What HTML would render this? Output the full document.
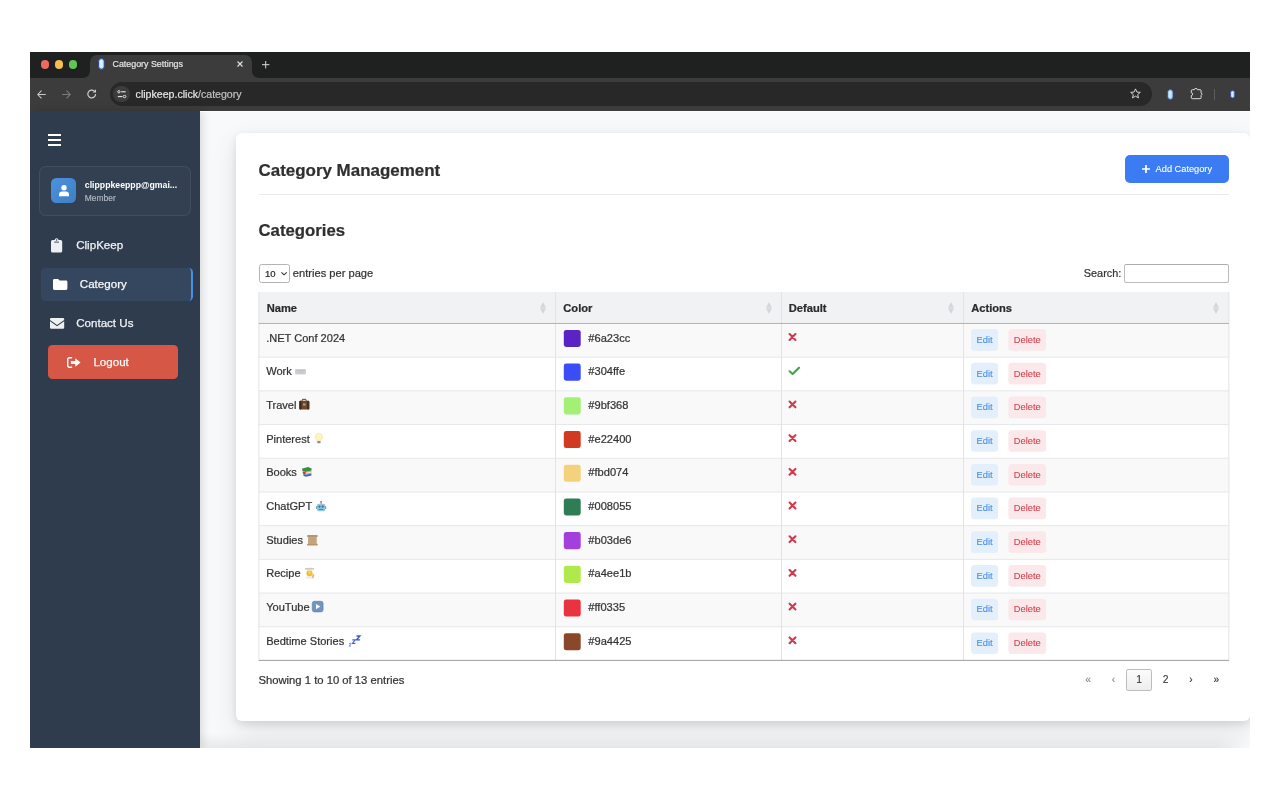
<!DOCTYPE html>
<html lang="en">
<head>
<meta charset="utf-8">
<title>Category Settings</title>
<style>
*{box-sizing:border-box;margin:0;padding:0}
html,body{width:1280px;height:800px;overflow:hidden;background:#fff}
body{font-family:"Liberation Sans",sans-serif;color:#333;position:relative}
.abs{position:absolute}
#win{position:absolute;left:0;top:0;width:1280px;height:800px;clip-path:inset(52px 30px 52.4px 30px);will-change:transform;transform:translateZ(0)}
/* browser chrome */
#tabbar{left:30px;top:52px;width:1220px;height:26px;background:#1f2120}
#toolbar{left:30px;top:77.6px;width:1220px;height:33.4px;background:#3c3c3c}
#tab{left:90px;top:55px;width:161.5px;height:23px;background:#3c3c3c;border-radius:7px 7px 0 0}
.tabcurve{width:7px;height:7px;top:70.7px;background:#3c3c3c}
.tabcurve i{position:absolute;left:0;top:0;width:7px;height:7px;background:#1f2120}
#tabtitle{-webkit-text-stroke:.18px;left:112.5px;top:59.2px;font-size:8.87px;color:#e6e6e6;line-height:11px;white-space:nowrap}
#urlbar{left:110px;top:82.4px;width:1042px;height:23.4px;border-radius:12px;background:#282828}
#urlchip{left:113.2px;top:85.8px;width:16.6px;height:16.6px;border-radius:50%;background:#3c3c3c}
#urltext{-webkit-text-stroke:.18px;left:135.6px;top:87.5px;font-size:10.6px;line-height:13px;color:#e8e8e8;white-space:nowrap}
#urltext span{color:#c6c6c6}
/* page */
#page{left:30px;top:111px;width:1220px;height:637px;background:#f8f9fa}
#pagetopline{left:200px;top:111px;width:1220px;height:1px;background:#fdfdfe}
#sidebar{left:30px;top:111px;width:170px;height:637px;background:#2f3c4e;box-shadow:2px 0 9px rgba(0,0,0,.14)}
#card{left:236px;top:133px;width:1013.5px;height:588px;background:#fff;border-radius:6px;box-shadow:0 3px 8px rgba(0,0,0,.10),0 10px 28px rgba(0,0,0,.095)}

.tl{width:8.6px;height:8.6px;border-radius:50%;top:60.1px}
svg{position:absolute;overflow:visible}

.hb{left:48px;width:13px;height:1.9px;background:#fff;border-radius:.3px}
#ucard{left:39.3px;top:166.2px;width:151.8px;height:49.8px;border:1px solid rgba(255,255,255,.075);border-radius:7px;background:rgba(255,255,255,.025)}
#avatar{left:51px;top:178px;width:25.2px;height:25.2px;border-radius:5.5px;background:linear-gradient(135deg,#4b93dc,#3f7fc4)}
#email{left:84.8px;top:180px;font-size:8.72px;font-weight:700;color:#fff;line-height:11px;white-space:nowrap}
#role{-webkit-text-stroke:.15px;left:84.8px;top:192.6px;font-size:8.45px;color:#b3bbc6;line-height:11px;white-space:nowrap}
.nav{font-size:11.58px;color:#f1f3f5;line-height:14px;white-space:nowrap;-webkit-text-stroke:.25px #f1f3f5}
#navactive{left:40.8px;top:267.8px;width:152.2px;height:33.5px;border-radius:4.5px;background:#35475f;border-right:2.6px solid #4a90e2}
#logout{left:48px;top:345.4px;width:130.2px;height:33.6px;border-radius:4.5px;background:#d65745}

.t{white-space:nowrap;position:absolute;-webkit-text-stroke:.22px}
#h1{left:258.5px;top:160.5px;font-size:16.95px;font-weight:700;color:#2f2f2f;line-height:20px}
#h2{left:258.5px;top:220.6px;font-size:16.74px;font-weight:700;color:#2f2f2f;line-height:20px}
#hr{left:259px;top:193.9px;width:970px;height:1px;background:#e8eaed}
#addbtn{left:1125px;top:155.3px;width:104px;height:27.6px;border-radius:5px;background:#3b7cf4}
#addtxt{-webkit-text-stroke:.1px;left:1155.6px;top:163.2px;font-size:9.24px;color:#fff;line-height:12px}
#sel{left:258.6px;top:264.3px;width:31px;height:18.5px;border:1px solid #b4b4b4;border-radius:2.5px;background:#fff}
#seltxt{left:265px;top:267.8px;font-size:9.5px;color:#2a2a2a;line-height:12px}
#epp{left:292.8px;top:265.5px;font-size:11.14px;color:#333;line-height:14px}
#slabel{left:1083.8px;top:265.6px;font-size:10.88px;color:#333;line-height:14px}
#sinput{left:1124.3px;top:264.2px;width:104.8px;height:19.2px;border:1px solid #bcbcbc;border-top-color:#adadad;border-radius:2.2px;background:#fff}
#thead{left:258.8px;top:292px;width:970.2px;height:31px;background:#f1f2f4}
#theadline{left:258.8px;top:322.7px;width:970.2px;height:1px;background:#b2b3b5}
.th{font-size:11.15px;font-weight:700;color:#2b2b2b;line-height:14px;top:301px}
.row{left:258.8px;width:970.2px;height:33.75px;border-bottom:1px solid #e6e8eb}
.odd{background:#f9f9f9}
.vl{top:292px;width:1px;height:368.5px;background:#e1e4e8}
.name{left:266.2px;font-size:11.05px;color:#333;line-height:14px}
.hex{left:588.3px;font-size:11.1px;color:#333;line-height:14px}
.sw{left:563.8px;width:16.8px;height:16.8px;border-radius:2.6px}
.edit{-webkit-text-stroke:.1px;left:971px;width:27.1px;color:#4a8fe0;font-size:9.3px;line-height:12px;text-align:center}
.del{-webkit-text-stroke:.1px;left:1008.4px;width:37.7px;color:#d2434f;font-size:9.3px;line-height:12px;text-align:center}
#tbot{left:258.8px;top:659.9px;width:970.2px;height:1px;background:#a5a5a5}
#info{left:258.4px;top:672.7px;font-size:11.27px;color:#333;line-height:14px}
.pg{font-size:10.3px;color:#333;line-height:12px;top:673.8px;width:20px;text-align:center;-webkit-text-stroke:.1px}
.pgd{color:#8a8a8a}
#pgcur{left:1126.3px;top:669px;width:25.4px;height:21.5px;border:1px solid #bcbcbc;border-radius:2.2px;background:linear-gradient(#fcfcfc,#ededed)}
#botband{left:200px;top:733px;width:1050px;height:15px;background:linear-gradient(rgba(0,0,0,0),rgba(0,0,0,.065));-webkit-mask-image:linear-gradient(to right,#000 1016px,transparent 1048px);mask-image:linear-gradient(to right,#000 1016px,transparent 1048px)}
</style>
</head>
<body>
<div id="win">
  <div id="tabbar" class="abs"></div>
  <div id="toolbar" class="abs"></div>
  <div id="tab" class="abs"></div>
  <div id="tabtitle" class="abs">Category Settings</div>
  <div id="urlbar" class="abs"></div>
  <div id="urlchip" class="abs"></div>
  <div id="urltext" class="abs">clipkeep.click<span>/category</span></div>

  <!-- traffic lights -->
  <div class="abs tl" style="left:40.7px;background:#ee6a5f"></div>
  <div class="abs tl" style="left:54.7px;background:#f5bf4f"></div>
  <div class="abs tl" style="left:68.6px;background:#62c655"></div>
  <!-- tab curves -->
  <svg style="left:83px;top:70.6px" width="7" height="7" viewBox="0 0 7 7"><path d="M7 0V7H0A7 7 0 0 0 7 0Z" fill="#3c3c3c"/></svg>
  <svg style="left:251.5px;top:70.6px" width="7" height="7" viewBox="0 0 7 7"><path d="M0 0V7H7A7 7 0 0 1 0 0Z" fill="#3c3c3c"/></svg>
  <!-- favicon -->
  <svg style="left:97.7px;top:58.3px" width="7" height="12" viewBox="0 0 7 12"><rect x="0.6" y="0.6" width="5.6" height="10.6" rx="2.8" fill="#c6ecfb" stroke="#2f3f95" stroke-width="1"/><rect x="2.4" y="2.4" width="1.5" height="6.6" rx=".75" fill="#e4f7ff"/></svg>
  <!-- tab close / new tab -->
  <svg style="left:237.2px;top:61.4px" width="6" height="6" viewBox="0 0 6 6"><path d="M.5 .5L5.5 5.5M5.5 .5L.5 5.5" stroke="#e4e4e4" stroke-width="1.1" fill="none"/></svg>
  <svg style="left:261.5px;top:60.8px" width="7.4" height="7.4" viewBox="0 0 7.4 7.4"><path d="M3.7 0V7.4M0 3.7H7.4" stroke="#dcdcdc" stroke-width="1" fill="none"/></svg>
  <!-- nav icons -->
  <svg style="left:37.2px;top:89.6px" width="9" height="9" viewBox="0 0 9 9"><path d="M8.8 4.5H.9M4.5 .7L.8 4.5L4.5 8.3" stroke="#c9c9c9" stroke-width="1.05" fill="none"/></svg>
  <svg style="left:61.6px;top:89.6px" width="9" height="9" viewBox="0 0 9 9"><path d="M.2 4.5H8.1M4.5 .7L8.2 4.5L4.5 8.3" stroke="#7e7e7e" stroke-width="1.05" fill="none"/></svg>
  <svg style="left:86.8px;top:89.4px" width="10" height="10" viewBox="0 0 10 10"><path d="M8.6 5A3.9 3.9 0 1 1 7.3 2.1" stroke="#cdcdcd" stroke-width="1.2" fill="none"/><path d="M5.6 3.6H9V.2Z" fill="#cdcdcd"/></svg>
  <!-- tune icon -->
  <svg style="left:116.6px;top:90px" width="10" height="8.4" viewBox="0 0 10 8.4"><circle cx="1.9" cy="1.75" r="1.15" stroke="#dedede" stroke-width="1" fill="none"/><path d="M4.2 1.75H8.7" stroke="#dedede" stroke-width="1.2"/><ellipse cx="7.5" cy="6.55" rx="1.45" ry="1.15" stroke="#dedede" stroke-width="1" fill="none"/><path d="M.8 6.55H5.3" stroke="#dedede" stroke-width="1.2"/></svg>
  <!-- star -->
  <svg style="left:1130.3px;top:88.4px" width="11" height="10.5" viewBox="0 0 11 10.5"><path d="M5.5 .9L6.9 4.05L10.3 4.35L7.7 6.6L8.5 9.9L5.5 8.15L2.5 9.9L3.3 6.6L.7 4.35L4.1 4.05Z" stroke="#dcdcdc" stroke-width=".95" fill="none" stroke-linejoin="round"/></svg>
  <!-- ext icon -->
  <svg style="left:1167.2px;top:88.8px" width="6.6" height="11" viewBox="0 0 6.6 11"><rect x=".6" y=".6" width="5.4" height="9.8" rx="2.7" fill="#b3daf7" stroke="#33439a" stroke-width=".75"/><rect x="2.2" y="2.2" width="1.4" height="6" rx=".7" fill="#dff1ff"/></svg>
  <!-- puzzle -->
  <svg style="left:1190.6px;top:88px" width="12" height="12" viewBox="0 0 12 12"><path d="M1.3 1.7H3.5V1.5A1.4 1.1 0 0 1 6.3 1.5V1.7H9.1A1 1 0 0 1 10.1 2.7V4.9L11.2 6.15L10.1 7.4V9.7A1 1 0 0 1 9.1 10.7H1.3A1 1 0 0 1 .3 9.7V7.5A1.35 1.35 0 0 0 .3 4.8V2.7A1 1 0 0 1 1.3 1.7Z" stroke="#dedede" stroke-width="1" fill="none" stroke-linejoin="round"/></svg>
  <div class="abs" style="left:1214px;top:89px;width:1px;height:10.6px;background:#5d5d5d"></div>
  <svg style="left:1230.4px;top:90px" width="5.2" height="8.6" viewBox="0 0 5.2 8.6"><rect x=".55" y=".55" width="4.1" height="7.5" rx="2.05" fill="#b3daf7" stroke="#33439a" stroke-width=".7"/><rect x="1.8" y="1.8" width="1" height="4.6" rx=".5" fill="#dff1ff"/></svg>
  <div id="page" class="abs"></div>
  <div id="card" class="abs"></div>
  <!-- card content -->
  <div id="h1" class="t">Category Management</div>
  <div id="addbtn" class="abs"></div>
  <svg style="left:1142px;top:165px" width="8" height="8" viewBox="0 0 8 8"><path d="M4 0V8M0 4H8" stroke="#fff" stroke-width="1.7"/></svg>
  <div id="addtxt" class="t">Add Category</div>
  <div id="hr" class="abs"></div>
  <div id="h2" class="t">Categories</div>
  <div id="sel" class="abs"></div><div id="seltxt" class="t">10</div>
  <svg style="left:280.8px;top:271.9px" width="6.2" height="3.4" viewBox="0 0 6.2 3.4"><path d="M.4 .4L3.1 2.9L5.8 .4" stroke="#333" stroke-width="1.05" fill="none"/></svg>
  <div id="epp" class="t">entries per page</div>
  <div id="slabel" class="t">Search:</div><div id="sinput" class="abs"></div>
  <svg style="left:0;top:0" width="1280" height="800" viewBox="0 0 1280 800"><rect x="258.8" y="292" width="970.2" height="31.45" fill="#f1f2f4"/><rect x="258.8" y="323.45" width="970.2" height="33.70" fill="#f9f9f9"/><rect x="258.8" y="390.85" width="970.2" height="33.70" fill="#f9f9f9"/><rect x="258.8" y="458.25" width="970.2" height="33.70" fill="#f9f9f9"/><rect x="258.8" y="525.65" width="970.2" height="33.70" fill="#f9f9f9"/><rect x="258.8" y="593.05" width="970.2" height="33.70" fill="#f9f9f9"/><rect x="258.8" y="356.65" width="970.2" height="1" fill="#e5e7ea"/><rect x="258.8" y="390.35" width="970.2" height="1" fill="#e5e7ea"/><rect x="258.8" y="424.05" width="970.2" height="1" fill="#e5e7ea"/><rect x="258.8" y="457.75" width="970.2" height="1" fill="#e5e7ea"/><rect x="258.8" y="491.45" width="970.2" height="1" fill="#e5e7ea"/><rect x="258.8" y="525.15" width="970.2" height="1" fill="#e5e7ea"/><rect x="258.8" y="558.85" width="970.2" height="1" fill="#e5e7ea"/><rect x="258.8" y="592.55" width="970.2" height="1" fill="#e5e7ea"/><rect x="258.8" y="626.25" width="970.2" height="1" fill="#e5e7ea"/><rect x="555.0" y="292" width="1" height="368.45" fill="#e0e3e7"/><rect x="781.0" y="292" width="1" height="368.45" fill="#e0e3e7"/><rect x="963.0" y="292" width="1" height="368.45" fill="#e0e3e7"/><rect x="258.40000000000003" y="292" width="1" height="368.45" fill="#e0e3e7"/><rect x="1228.4" y="292" width="1" height="368.45" fill="#e0e3e7"/><rect x="258.8" y="322.95" width="970.2" height="1" fill="#b1b2b4"/><rect x="258.8" y="659.85" width="970.2" height="1.1" fill="#a6a6a6"/><rect x="563.8" y="329.90" width="16.9" height="17.1" rx="2.4" fill="#5a24c4"/><rect x="971" y="329.10" width="27.1" height="21.65" rx="3.5" fill="#e3effb"/><rect x="1008.4" y="329.10" width="37.7" height="21.65" rx="3.5" fill="#fbe8ea"/><path transform="translate(788.6 333.10)" d="M1 1L6.8 6.8M6.8 1L1 6.8" stroke="#d03a4c" stroke-width="2.1" fill="none" stroke-linecap="round"/><rect x="563.8" y="363.60" width="16.9" height="17.1" rx="2.4" fill="#3a4df6"/><rect x="971" y="362.80" width="27.1" height="21.65" rx="3.5" fill="#e3effb"/><rect x="1008.4" y="362.80" width="37.7" height="21.65" rx="3.5" fill="#fbe8ea"/><path transform="translate(788.6 366.80)" d="M1 4.5L4 7.2L10.4 1" stroke="#3da64b" stroke-width="2.1" fill="none" stroke-linecap="round" stroke-linejoin="round"/><rect x="563.8" y="397.30" width="16.9" height="17.1" rx="2.4" fill="#a2f074"/><rect x="971" y="396.50" width="27.1" height="21.65" rx="3.5" fill="#e3effb"/><rect x="1008.4" y="396.50" width="37.7" height="21.65" rx="3.5" fill="#fbe8ea"/><path transform="translate(788.6 400.50)" d="M1 1L6.8 6.8M6.8 1L1 6.8" stroke="#d03a4c" stroke-width="2.1" fill="none" stroke-linecap="round"/><rect x="563.8" y="431.00" width="16.9" height="17.1" rx="2.4" fill="#d13a20"/><rect x="971" y="430.20" width="27.1" height="21.65" rx="3.5" fill="#e3effb"/><rect x="1008.4" y="430.20" width="37.7" height="21.65" rx="3.5" fill="#fbe8ea"/><path transform="translate(788.6 434.20)" d="M1 1L6.8 6.8M6.8 1L1 6.8" stroke="#d03a4c" stroke-width="2.1" fill="none" stroke-linecap="round"/><rect x="563.8" y="464.70" width="16.9" height="17.1" rx="2.4" fill="#f4d27c"/><rect x="971" y="463.90" width="27.1" height="21.65" rx="3.5" fill="#e3effb"/><rect x="1008.4" y="463.90" width="37.7" height="21.65" rx="3.5" fill="#fbe8ea"/><path transform="translate(788.6 467.90)" d="M1 1L6.8 6.8M6.8 1L1 6.8" stroke="#d03a4c" stroke-width="2.1" fill="none" stroke-linecap="round"/><rect x="563.8" y="498.40" width="16.9" height="17.1" rx="2.4" fill="#2e7d55"/><rect x="971" y="497.60" width="27.1" height="21.65" rx="3.5" fill="#e3effb"/><rect x="1008.4" y="497.60" width="37.7" height="21.65" rx="3.5" fill="#fbe8ea"/><path transform="translate(788.6 501.60)" d="M1 1L6.8 6.8M6.8 1L1 6.8" stroke="#d03a4c" stroke-width="2.1" fill="none" stroke-linecap="round"/><rect x="563.8" y="532.10" width="16.9" height="17.1" rx="2.4" fill="#a340dd"/><rect x="971" y="531.30" width="27.1" height="21.65" rx="3.5" fill="#e3effb"/><rect x="1008.4" y="531.30" width="37.7" height="21.65" rx="3.5" fill="#fbe8ea"/><path transform="translate(788.6 535.30)" d="M1 1L6.8 6.8M6.8 1L1 6.8" stroke="#d03a4c" stroke-width="2.1" fill="none" stroke-linecap="round"/><rect x="563.8" y="565.80" width="16.9" height="17.1" rx="2.4" fill="#b0ea4a"/><rect x="971" y="565.00" width="27.1" height="21.65" rx="3.5" fill="#e3effb"/><rect x="1008.4" y="565.00" width="37.7" height="21.65" rx="3.5" fill="#fbe8ea"/><path transform="translate(788.6 569.00)" d="M1 1L6.8 6.8M6.8 1L1 6.8" stroke="#d03a4c" stroke-width="2.1" fill="none" stroke-linecap="round"/><rect x="563.8" y="599.50" width="16.9" height="17.1" rx="2.4" fill="#ea3340"/><rect x="971" y="598.70" width="27.1" height="21.65" rx="3.5" fill="#e3effb"/><rect x="1008.4" y="598.70" width="37.7" height="21.65" rx="3.5" fill="#fbe8ea"/><path transform="translate(788.6 602.70)" d="M1 1L6.8 6.8M6.8 1L1 6.8" stroke="#d03a4c" stroke-width="2.1" fill="none" stroke-linecap="round"/><rect x="563.8" y="633.20" width="16.9" height="17.1" rx="2.4" fill="#8a4729"/><rect x="971" y="632.40" width="27.1" height="21.65" rx="3.5" fill="#e3effb"/><rect x="1008.4" y="632.40" width="37.7" height="21.65" rx="3.5" fill="#fbe8ea"/><path transform="translate(788.6 636.40)" d="M1 1L6.8 6.8M6.8 1L1 6.8" stroke="#d03a4c" stroke-width="2.1" fill="none" stroke-linecap="round"/></svg>
  <div class="t th" style="left:266.7px">Name</div>
  <div class="t th" style="left:563.3px">Color</div>
  <div class="t th" style="left:788.8px">Default</div>
  <div class="t th" style="left:971.2px">Actions</div>
  <svg style="left:540px;top:301.9px" width="6" height="12" viewBox="0 0 6 12"><path d="M3 0L6 5.85H0Z" fill="#d4d6da"/><path d="M3 12L6 6.15H0Z" fill="#d4d6da"/></svg>
  <svg style="left:765.5px;top:301.9px" width="6" height="12" viewBox="0 0 6 12"><path d="M3 0L6 5.85H0Z" fill="#d4d6da"/><path d="M3 12L6 6.15H0Z" fill="#d4d6da"/></svg>
  <svg style="left:948.1px;top:301.9px" width="6" height="12" viewBox="0 0 6 12"><path d="M3 0L6 5.85H0Z" fill="#d4d6da"/><path d="M3 12L6 6.15H0Z" fill="#d4d6da"/></svg>
  <svg style="left:1212.8px;top:301.9px" width="6" height="12" viewBox="0 0 6 12"><path d="M3 0L6 5.85H0Z" fill="#d4d6da"/><path d="M3 12L6 6.15H0Z" fill="#d4d6da"/></svg>
  <div class="t name" style="top:330.80px">.NET Conf 2024</div>
  <div class="t hex" style="top:331.10px">#6a23cc</div>
  <div class="t edit" style="top:333.90px">Edit</div><div class="t del" style="top:333.90px">Delete</div>
  <div class="t name" style="top:363.80px">Work</div>
  <svg style="left:295px;top:369.35px" width="11" height="5.6" viewBox="0 0 11 5.6"><rect width="11" height="5.6" rx="1" fill="#cfd1d5"/><rect x="1" y="1.1" width="9" height="1.2" fill="#c0c2c7"/><rect x="2.4" y="3.3" width="6.2" height="1" fill="#c0c2c7"/></svg>
  <div class="t hex" style="top:364.10px">#304ffe</div>
  <div class="t edit" style="top:367.90px">Edit</div><div class="t del" style="top:367.90px">Delete</div>
  <div class="t name" style="top:397.80px">Travel</div>
  <svg style="left:298.9px;top:399.25px" width="10.6" height="10.8" viewBox="0 0 10.6 10.8"><rect x="3.2" y=".3" width="4" height="2.4" rx=".8" fill="none" stroke="#3d2616" stroke-width=".9"/><rect x=".3" y="1.8" width="10" height="8.7" rx="1.3" fill="#6f4628"/><rect x=".3" y="1.8" width="2.2" height="8.7" rx="1" fill="#3f2817"/><rect x="8.1" y="1.8" width="2.2" height="8.7" rx="1" fill="#4a2f1b"/><rect x="4" y="4.4" width="2.6" height="2.2" fill="#8da2a6"/></svg>
  <div class="t hex" style="top:398.10px">#9bf368</div>
  <div class="t edit" style="top:400.90px">Edit</div><div class="t del" style="top:400.90px">Delete</div>
  <div class="t name" style="top:431.80px">Pinterest</div>
  <svg style="left:314.7px;top:433.25px" width="7.8" height="10.8" viewBox="0 0 7.8 10.8"><path d="M3.9 .2A3.7 3.7 0 0 1 7.6 3.9C7.6 5.6 6.1 6.4 5.8 8H2C1.7 6.4 .2 5.6 .2 3.9A3.7 3.7 0 0 1 3.9 .2Z" fill="#fdf4c4" stroke="#ecdc92" stroke-width=".5"/><rect x="2.2" y="8.1" width="3.4" height="2.1" rx=".6" fill="#8b8f96"/></svg>
  <div class="t hex" style="top:432.10px">#e22400</div>
  <div class="t edit" style="top:434.90px">Edit</div><div class="t del" style="top:434.90px">Delete</div>
  <div class="t name" style="top:464.80px">Books</div>
  <svg style="left:301.7px;top:467.45px" width="9.8" height="9.8" viewBox="0 0 9.8 9.8"><path d="M.2 1.6L6.2 .1L9.6 1.4V3.6L3.4 5L.2 3.8Z" fill="#3f8e3c"/><path d="M.8 4.2L3.6 5.3L9.2 4V6.2L3.6 7.4L.8 6.4Z" fill="#c0392f"/><path d="M1.4 6.8L3.8 7.7L9.4 6.5V8.6L4 9.8L1.4 8.8Z" fill="#3d66b3"/><path d="M3.6 5.6L9.2 4.3V5.9L3.6 7.1Z" fill="#f0e6d6"/></svg>
  <div class="t hex" style="top:465.10px">#fbd074</div>
  <div class="t edit" style="top:468.90px">Edit</div><div class="t del" style="top:468.90px">Delete</div>
  <div class="t name" style="top:498.80px">ChatGPT</div>
  <svg style="left:316px;top:500.65px" width="10.2" height="10.6" viewBox="0 0 10.2 10.6"><circle cx="5.1" cy=".9" r=".9" fill="#d8453a"/><rect x="4.6" y="1.4" width="1" height="1.6" fill="#7f8c95"/><rect x=".9" y="2.8" width="8.4" height="7.4" rx="2" fill="#8fc5de"/><rect x="0" y="5" width="1.2" height="3" rx=".5" fill="#6fa3bd"/><rect x="9" y="5" width="1.2" height="3" rx=".5" fill="#6fa3bd"/><circle cx="3.5" cy="5.6" r="1.1" fill="#2f6f92"/><circle cx="6.7" cy="5.6" r="1.1" fill="#2f6f92"/><rect x="2.9" y="7.9" width="4.4" height="1.1" fill="#4c8aa8"/></svg>
  <div class="t hex" style="top:499.10px">#008055</div>
  <div class="t edit" style="top:501.90px">Edit</div><div class="t del" style="top:501.90px">Delete</div>
  <div class="t name" style="top:532.80px">Studies</div>
  <svg style="left:307.2px;top:534.55px" width="10.8" height="10.6" viewBox="0 0 10.8 10.6"><rect x="1" y=".9" width="8.8" height="9" fill="#c8aa83"/><rect x="0" y="0" width="10.8" height="1.9" rx=".9" fill="#b8966b"/><rect x="0" y="8.7" width="10.8" height="1.9" rx=".9" fill="#b8966b"/><path d="M2.6 3.4H8.2M2.6 5.2H8.2M2.6 7H8.2" stroke="#b39870" stroke-width=".5"/></svg>
  <div class="t hex" style="top:533.10px">#b03de6</div>
  <div class="t edit" style="top:535.90px">Edit</div><div class="t del" style="top:535.90px">Delete</div>
  <div class="t name" style="top:565.80px">Recipe</div>
  <svg style="left:305.4px;top:568.35px" width="10" height="11" viewBox="0 0 10 11"><ellipse cx="4.6" cy=".9" rx="4.8" ry="1.1" fill="#c9c9c9"/><rect x="1" y="1.6" width="7.2" height="1.2" fill="#f4f4f4"/><rect x="1.4" y="2.5" width="6.2" height="5.7" rx="2.4" fill="#f3bd2a"/><circle cx="4.6" cy="4.6" r="1.5" fill="#fad24e"/><path d="M.7 10.6C.9 8.9 2.2 8.1 4.5 8.1C6.8 8.1 8 8.9 8.2 10.6Z" fill="#e6e9ef"/><path d="M7.6 5.9L9.4 6.6L8.4 10.2L7 9.9Z" fill="#f0ab66"/></svg>
  <div class="t hex" style="top:566.10px">#a4ee1b</div>
  <div class="t edit" style="top:569.90px">Edit</div><div class="t del" style="top:569.90px">Delete</div>
  <div class="t name" style="top:599.80px">YouTube</div>
  <svg style="left:311.9px;top:601.35px" width="11.4" height="11.2" viewBox="0 0 11.4 11.2"><rect x=".3" y=".3" width="10.8" height="10.6" rx="2.1" fill="#7395bd" stroke="#557aa6" stroke-width=".6"/><path d="M4 2.9L8.3 5.6L4 8.3Z" fill="#fff"/></svg>
  <div class="t hex" style="top:600.10px">#ff0335</div>
  <div class="t edit" style="top:602.90px">Edit</div><div class="t del" style="top:602.90px">Delete</div>
  <div class="t name" style="top:633.80px">Bedtime Stories</div>
  <svg style="left:349.1px;top:634.75px" width="11.4" height="11.8" viewBox="0 0 11.4 11.8"><path d="M7.5 1H10.9L7.6 4.9H11.1" stroke="#3858d6" stroke-width="1.45" fill="none"/><path d="M3.3 4.9H6.2L3.4 8.4H6.4" stroke="#4868dc" stroke-width="1.1" fill="none"/><path d="M0 8.6H2L.1 11.1H2.1" stroke="#5b78e0" stroke-width=".8" fill="none"/></svg>
  <div class="t hex" style="top:634.10px">#9a4425</div>
  <div class="t edit" style="top:636.90px">Edit</div><div class="t del" style="top:636.90px">Delete</div>
  <div id="info" class="t">Showing 1 to 10 of 13 entries</div>
  <div id="pgcur" class="abs"></div>
  <div class="t pg pgd" style="left:1078.0px">«</div>
  <div class="t pg pgd" style="left:1103.4px">‹</div>
  <div class="t pg " style="left:1129.0px">1</div>
  <div class="t pg " style="left:1155.5px">2</div>
  <div class="t pg " style="left:1181.0px">›</div>
  <div class="t pg " style="left:1206.3px">»</div>
  <div id="botband" class="abs"></div>
  <div id="sidebar" class="abs"></div>
  <div id="pagetopline" class="abs"></div>
  <!-- sidebar content -->
  <div class="abs hb" style="top:134.3px"></div>
  <div class="abs hb" style="top:139.1px"></div>
  <div class="abs hb" style="top:143.9px"></div>
  <div id="ucard" class="abs"></div>
  <div id="avatar" class="abs"></div>
  <svg style="left:58.9px;top:185.3px" width="10" height="11.4" viewBox="0 0 10 11.4"><circle cx="5" cy="2.8" r="2.7" fill="#fff"/><path d="M0 11.2V9.7A3.2 3.2 0 0 1 3.2 6.5H6.8A3.2 3.2 0 0 1 10 9.7V11.2Z" fill="#fff"/></svg>
  <div id="email" class="abs">clipppkeeppp@gmai...</div>
  <div id="role" class="abs">Member</div>
  <!-- ClipKeep -->
  <svg style="left:51px;top:238.3px" width="11.2" height="14.6" viewBox="0 0 11.2 14.6"><path d="M1.6 1.9H3.6A2.05 2.05 0 0 1 7.6 1.9H9.6A1.6 1.6 0 0 1 11.2 3.5V13A1.6 1.6 0 0 1 9.6 14.6H1.6A1.6 1.6 0 0 1 0 13V3.5A1.6 1.6 0 0 1 1.6 1.9Z" fill="#eef1f3"/><circle cx="5.6" cy="2" r=".75" fill="#2e3b4e"/><path d="M3.2 4.1H8" stroke="#2e3b4e" stroke-width=".9"/></svg>
  <div class="abs nav" style="left:76.2px;top:238.2px">ClipKeep</div>
  <!-- Category active -->
  <div id="navactive" class="abs"></div>
  <svg style="left:52.8px;top:279.2px" width="14.4" height="10.9" viewBox="0 0 14.4 10.9"><path d="M1.3 0H5.1L6.7 1.6H13.1A1.3 1.3 0 0 1 14.4 2.9V9.6A1.3 1.3 0 0 1 13.1 10.9H1.3A1.3 1.3 0 0 1 0 9.6V1.3A1.3 1.3 0 0 1 1.3 0Z" fill="#fff"/></svg>
  <div class="abs nav" style="left:79.8px;top:277.2px;color:#fff">Category</div>
  <!-- Contact -->
  <svg style="left:50px;top:318px" width="14.2" height="10.8" viewBox="0 0 14.2 10.8"><path d="M1.3 0H12.9A1.3 1.3 0 0 1 14.2 1.3V1.9L7.1 6.9L0 1.9V1.3A1.3 1.3 0 0 1 1.3 0Z" fill="#eef1f3"/><path d="M0 3.3L7.1 8.3L14.2 3.3V9.5A1.3 1.3 0 0 1 12.9 10.8H1.3A1.3 1.3 0 0 1 0 9.5Z" fill="#eef1f3"/></svg>
  <div class="abs nav" style="left:76.2px;top:316.2px">Contact Us</div>
  <!-- Logout -->
  <div id="logout" class="abs"></div>
  <svg style="left:66.5px;top:356.8px" width="13.8" height="11" viewBox="0 0 13.8 11"><path d="M4.6 .7H2.4A1.7 1.7 0 0 0 .7 2.4V8.6A1.7 1.7 0 0 0 2.4 10.3H4.6" stroke="#fff" stroke-width="1.4" fill="none" stroke-linecap="round"/><path d="M3.9 4H8.3V1.3L13.6 5.5L8.3 9.7V7H3.9Z" fill="#fff"/></svg>
  <div class="abs nav" style="left:93.4px;top:354.9px;color:#fff">Logout</div>

</div>
</body>
</html>
